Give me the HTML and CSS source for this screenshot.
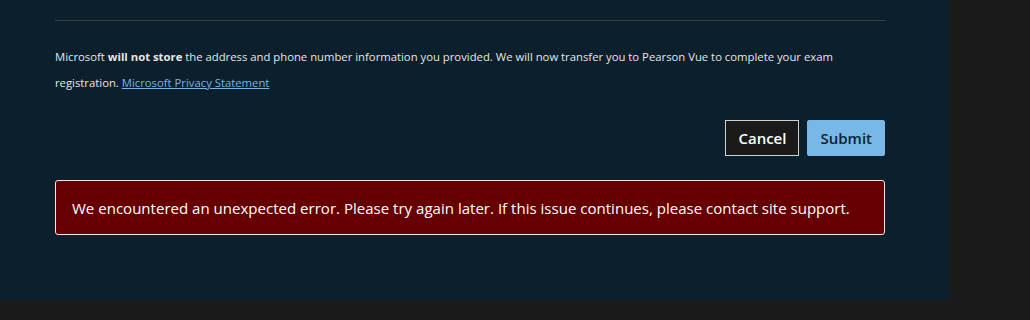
FILE: index.html
```html
<!DOCTYPE html>
<html lang="en">
<head>
<meta charset="utf-8">
<link rel="stylesheet" href="styles.css">
</head>
<body>
<div class="panel">
  <div class="content">
    <hr class="divider">
    <p class="notice">Microsoft <strong>will not store</strong> the address and phone number information you provided. We will now transfer you to Pearson Vue to complete your exam registration. <a href="#" class="link">Microsoft Privacy Statement</a></p>
    <div class="actions">
      <button class="btn btn-cancel">Cancel</button>
      <button class="btn btn-submit">Submit</button>
    </div>
    <div class="error">We encountered an unexpected error. Please try again later. If this issue continues, please contact site support.</div>
  </div>
</div>
</body>
</html>
```
FILE: styles.css
```css
html, body {
  margin: 0;
  padding: 0;
  background: #1a1a1a;
}
body {
  font-family: "Open Sans", "Noto Sans", sans-serif;
  color: #e6e6e6;
}
.panel {
  width: 950px;
  height: 300px;
  background: #0b1f2d;
  box-sizing: border-box;
  padding: 20px 0 0 55px;
}
.content {
  width: 830px;
}
.divider {
  margin: 0;
  border: 0;
  height: 1px;
  background: #3f3f3f;
}
.notice {
  margin: 23px 0 0;
  font-size: 11.3px;
  line-height: 26px;
  color: #e6e6e6;
  padding-right: 30px;
}
.notice strong {
  font-weight: 700;
}
.link {
  color: #75b6e7;
  text-decoration: underline;
}
.actions {
  display: flex;
  justify-content: flex-end;
  gap: 8px;
  margin-top: 24px;
}
.btn {
  height: 36px;
  font-family: inherit;
  font-size: 15px;
  font-weight: 600;
  padding: 0 12px;
  border-radius: 0;
  cursor: pointer;
}
.btn-cancel {
  background: #1a1a1a;
  color: #ffffff;
  border: 1px solid #d0d0d0;
}
.btn-submit {
  background: #78b8e8;
  color: #0b1f2d;
  border: 1px solid #78b8e8;
  border-radius: 2px;
}
.error {
  margin-top: 24px;
  background: #660000;
  border: 1px solid #e8e8e8;
  border-radius: 3px;
  height: 55px;
  box-sizing: border-box;
  display: flex;
  align-items: center;
  padding: 0 16px;
  font-size: 15px;
  letter-spacing: 0.02px;
  color: #ffffff;
}
```
